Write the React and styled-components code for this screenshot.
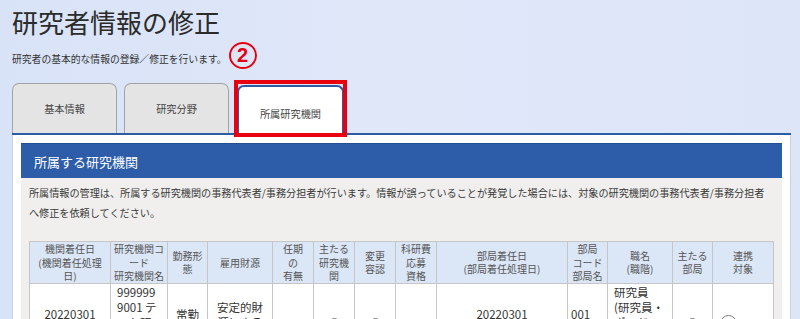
import React from "react";
import styled, { createGlobalStyle } from "styled-components";

const Global = createGlobalStyle`
  html, body { margin: 0; padding: 0; }
  body {
    background: #dde6f8;
    font-family: "Noto Sans CJK JP", "Noto Sans", sans-serif;
    color: #333;
  }
`;

const Page = styled.div`
  box-sizing: border-box;
  height: 319px;
  overflow: hidden;
  padding: 5px 9px 0 12px;
  background: linear-gradient(90deg, #d9e3f7 0%, #dfe7f9 45%, #dde6f8 100%);
`;

const Title = styled.h1`
  margin: 0;
  font-size: 26px;
  line-height: 34px;
  font-weight: 400;
  color: #2b2b2b;
  letter-spacing: 0;
`;

const SubLine = styled.div`
  display: flex;
  align-items: flex-end;
  margin-top: 3px;
  height: 27px;
  font-size: 9.8px;
  color: #333;
`;

const SubText = styled.span`
  line-height: 20px;
`;

const Marker = styled.span`
  box-sizing: border-box;
  width: 28px;
  height: 27px;
  margin-left: 2px;
  border: 2px solid #e8000f;
  border-radius: 50%;
  color: #e8000f;
  font-family: "Liberation Sans", Arial, sans-serif;
  font-weight: 700;
  font-size: 20px;
  display: flex;
  align-items: center;
  justify-content: center;
`;

const TabBar = styled.div`
  display: flex;
  align-items: flex-end;
  gap: 7px;
  margin-top: 14px;
  border-bottom: 2px solid #2d5ca6;
`;

const Tab = styled.div`
  position: relative;
  box-sizing: border-box;
  width: ${(p) => (p.$active ? 107 : 105)}px;
  height: 50px;
  margin-left: ${(p) => (p.$active ? 1 : 0)}px;
  margin-bottom: ${(p) => (p.$active ? -2 : 0)}px;
  padding-top: ${(p) => (p.$active ? 4 : 0)}px;
  display: flex;
  align-items: center;
  justify-content: center;
  font-size: 10.2px;
  color: #444;
  background: ${(p) => (p.$active ? "#fff" : "#e4e4e4")};
  border: ${(p) => (p.$active ? "2px solid #2d5ca6" : "1px solid #a3a3a3")};
  border-bottom: none;
  border-radius: 7px 7px 0 0;
`;

const Highlight = styled.span`
  position: absolute;
  top: -7px;
  left: -5px;
  right: -5px;
  bottom: -2px;
  border: 4px solid #e8000f;
  pointer-events: none;
`;

const Panel = styled.div`
  background: #fff;
  border-left: 1px solid #c9d2e3;
  border-right: 1px solid #c9d2e3;
  padding: 8px 8px 0 8px;
`;

const SectionHead = styled.div`
  height: 35px;
  box-sizing: border-box;
  display: flex;
  align-items: center;
  padding-left: 13px;
  background: #2d5da8;
  border-top: 1px solid #234f93;
  color: #fff;
  font-size: 13px;
`;

const SectionBody = styled.div`
  background: #f0efee;
  padding: 5px 10px 40px 8px;
`;

const Desc = styled.p`
  margin: 0;
  font-size: 10.15px;
  line-height: 20px;
  color: #3a3a3a;
  white-space: nowrap;
`;

const Table = styled.table`
  margin-top: 18px;
  width: 744px;
  border-collapse: collapse;
  table-layout: fixed;
  background: #fff;
`;

const Th = styled.th`
  height: 40px;
  box-sizing: border-box;
  padding: 0 2px;
  background: #dbe6f6;
  border: 1px solid #c6c6c6;
  font-size: 10px;
  line-height: 13.5px;
  font-weight: 400;
  color: #555;
  text-align: center;
  vertical-align: middle;
  white-space: nowrap;
`;

const Td = styled.td`
  box-sizing: border-box;
  padding: 1px ${(p) => p.$pad ?? 4}px 0;
  border: 1px solid #c6c6c6;
  font-size: 11.5px;
  line-height: 15px;
  color: #333;
  text-align: ${(p) => p.$align || "center"};
  vertical-align: middle;
  white-space: nowrap;
`;

const Radio = styled.span`
  display: inline-block;
  box-sizing: border-box;
  width: ${(p) => (p.$big ? 17 : 11)}px;
  height: ${(p) => (p.$big ? 17 : 11)}px;
  margin-top: 18px;
  border: 1px solid #7a7a7a;
  border-radius: 50%;
  background: #fff;
  vertical-align: middle;
`;

const widths = [81, 57, 40, 65, 41, 41, 41, 41, 131, 40, 65, 40, 61];

const headers = [
  ["機関着任日", "(機関着任処理", "日)"],
  ["研究機関コ", "ード", "研究機関名"],
  ["勤務形", "態"],
  ["雇用財源"],
  ["任期", "の", "有無"],
  ["主たる", "研究機", "関"],
  ["変更", "容認"],
  ["科研費", "応募", "資格"],
  ["部局着任日", "(部局着任処理日)"],
  ["部局", "コード", "部局名"],
  ["職名", "(職階)"],
  ["主たる", "部局"],
  ["連携", "対象"],
];

const Lines = ({ lines }) =>
  lines.map((l, i) => (
    <React.Fragment key={i}>
      {i > 0 && <br />}
      {l}
    </React.Fragment>
  ));

export default function App() {
  return (
    <>
      <Global />
      <Page>
        <Title>研究者情報の修正</Title>
        <SubLine>
          <SubText>研究者の基本的な情報の登録／修正を行います。</SubText>
          <Marker>2</Marker>
        </SubLine>
        <TabBar>
          <Tab>基本情報</Tab>
          <Tab>研究分野</Tab>
          <Tab $active>
            所属研究機関
            <Highlight />
          </Tab>
        </TabBar>
        <Panel>
          <SectionHead>所属する研究機関</SectionHead>
          <SectionBody>
            <Desc>
              所属情報の管理は、所属する研究機関の事務代表者/事務分担者が行います。情報が誤っていることが発覚した場合には、対象の研究機関の事務代表者/事務分担者
              <br />
              へ修正を依頼してください。
            </Desc>
            <Table>
              <colgroup>
                {widths.map((w, i) => (
                  <col key={i} style={{ width: w }} />
                ))}
              </colgroup>
              <thead>
                <tr>
                  {headers.map((h, i) => (
                    <Th key={i}>
                      <Lines lines={h} />
                    </Th>
                  ))}
                </tr>
              </thead>
              <tbody>
                <tr>
                  <Td>20220301</Td>
                  <Td $align="left" $pad={6}>
                    <Lines lines={["999999", "9001 テ", "スト研", "究機関"]} />
                  </Td>
                  <Td>常勤</Td>
                  <Td>
                    <Lines lines={["安定的財", "源による"]} />
                  </Td>
                  <Td />
                  <Td>
                    <Radio />
                  </Td>
                  <Td>
                    <Radio />
                  </Td>
                  <Td />
                  <Td>20220301</Td>
                  <Td $align="left" $pad={3}>
                    001
                  </Td>
                  <Td $align="left" $pad={6}>
                    <Lines lines={["研究員", "(研究員・", "ポスド", "ク)"]} />
                  </Td>
                  <Td>
                    <Radio />
                  </Td>
                  <Td $align="left" $pad={7}>
                    <Radio $big />
                  </Td>
                </tr>
              </tbody>
            </Table>
          </SectionBody>
        </Panel>
      </Page>
    </>
  );
}
